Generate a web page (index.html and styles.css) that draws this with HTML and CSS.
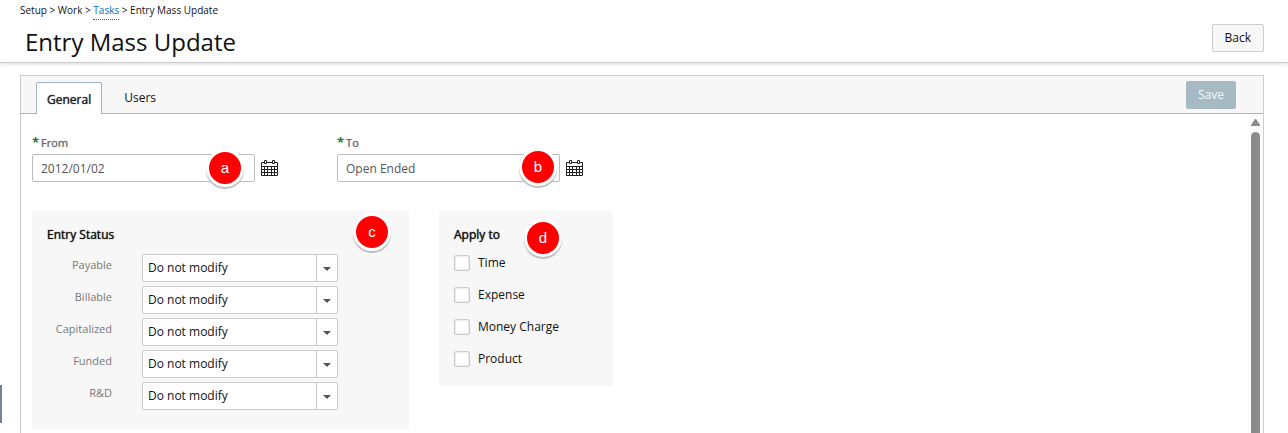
FILE: index.html
```html
<!DOCTYPE html>
<html lang="en">
<head>
<meta charset="UTF-8">
<title>Entry Mass Update</title>
<link rel="stylesheet" href="styles.css">
</head>
<body>
<header class="header">
    <div class="heading">
        <nav class="crumbs">Setup &gt; Work &gt; <a href="#">Tasks</a> &gt; Entry Mass Update</nav>
        <h1>Entry Mass Update</h1>
    </div>
    <button type="button" class="btn">Back</button>
</header>
<div class="handle"></div>
<main class="panel">
    <div class="bar">
        <div class="tabs">
            <button type="button" class="tab active">General</button>
            <button type="button" class="tab">Users</button>
        </div>
        <button type="button" class="btn save">Save</button>
    </div>
    <div class="body">
        <form class="content">
            <div class="dates">
                <div class="field">
                    <label for="from"><b>*</b>From</label>
                    <div class="date">
                        <input type="text" id="from" value="2012/01/02">
                        <span class="mark mark-a">a</span>
                        <svg class="cal" viewBox="0 0 17 17" width="17" height="17">
                            <rect y="2" width="17" height="14" rx="1" fill="#222"/>
                            <path d="M1 3h15v3H1z" fill="#fff"/>
                            <path d="M1 7h2v2H1zM4 7h2v2H4zM7 7h3v2H7zM11 7h2v2h-2zM14 7h2v2h-2zM1 10h2v2H1zM4 10h2v2H4zM7 10h3v2H7zM11 10h2v2h-2zM14 10h2v2h-2zM1 13h2v2H1zM4 13h2v2H4zM7 13h3v2H7zM11 13h2v2h-2zM14 13h2v2h-2z" fill="#fff"/>
                            <rect x="3" width="3" height="4" rx="1" fill="#222"/>
                            <rect x="11" width="3" height="4" rx="1" fill="#222"/>
                            <path d="M4 1h1v2H4zM12 1h1v2h-1z" fill="#fff"/>
                        </svg>
                    </div>
                </div>
                <div class="field">
                    <label for="to"><b>*</b>To</label>
                    <div class="date">
                        <input type="text" id="to" value="Open Ended">
                        <span class="mark mark-b">b</span>
                        <svg class="cal" viewBox="0 0 17 17" width="17" height="17">
                            <rect y="2" width="17" height="14" rx="1" fill="#222"/>
                            <path d="M1 3h15v3H1z" fill="#fff"/>
                            <path d="M1 7h2v2H1zM4 7h2v2H4zM7 7h3v2H7zM11 7h2v2h-2zM14 7h2v2h-2zM1 10h2v2H1zM4 10h2v2H4zM7 10h3v2H7zM11 10h2v2h-2zM14 10h2v2h-2zM1 13h2v2H1zM4 13h2v2H4zM7 13h3v2H7zM11 13h2v2h-2zM14 13h2v2h-2z" fill="#fff"/>
                            <rect x="3" width="3" height="4" rx="1" fill="#222"/>
                            <rect x="11" width="3" height="4" rx="1" fill="#222"/>
                            <path d="M4 1h1v2H4zM12 1h1v2h-1z" fill="#fff"/>
                        </svg>
                    </div>
                </div>
            </div>
            <div class="cards">
                <section class="card status">
                    <h2>Entry Status</h2>
                    <span class="mark mark-c">c</span>
                    <div class="row">
                        <label for="payable">Payable</label>
                        <div class="select"><select id="payable"><option>Do not modify</option></select></div>
                    </div>
                    <div class="row">
                        <label for="billable">Billable</label>
                        <div class="select"><select id="billable"><option>Do not modify</option></select></div>
                    </div>
                    <div class="row">
                        <label for="capitalized">Capitalized</label>
                        <div class="select"><select id="capitalized"><option>Do not modify</option></select></div>
                    </div>
                    <div class="row">
                        <label for="funded">Funded</label>
                        <div class="select"><select id="funded"><option>Do not modify</option></select></div>
                    </div>
                    <div class="row">
                        <label for="rd">R&amp;D</label>
                        <div class="select"><select id="rd"><option>Do not modify</option></select></div>
                    </div>
                </section>
                <section class="card apply">
                    <h2>Apply to</h2>
                    <span class="mark mark-d">d</span>
                    <label><input type="checkbox">Time</label>
                    <label><input type="checkbox">Expense</label>
                    <label><input type="checkbox">Money Charge</label>
                    <label><input type="checkbox">Product</label>
                </section>
            </div>
        </form>
        <div class="scroll">
            <svg viewBox="0 0 9 7" width="9" height="7"><path d="M4 0h1l4 6v1H0V6z" fill="#8b8b8b"/></svg>
            <div class="thumb"></div>
        </div>
    </div>
</main>
</body>
</html>
```
FILE: styles.css
```css
*{margin: 0;padding: 0;box-sizing: border-box;}
body{height: 100vh;display: flex;flex-direction: column;overflow: hidden;background: #fff;color: #111;font: 12px/16px "Open Sans","Noto Sans",sans-serif;}
button,input,select{font: inherit;color: inherit;}

/* page header */
.header{display: flex;justify-content: space-between;align-items: flex-start;padding: 2px 24px 2px 20px;border-bottom: 1px solid #ccc;box-shadow: 0 1px 4px rgba(0,0,0,.15);}
.crumbs{font-size: 10px;line-height: 16px;}
.crumbs a{display: inline-block;color: #0a6ebd;text-decoration: none;border-bottom: 1px dotted #0a6ebd;line-height: 17px;}
h1{font-size: 24px;line-height: 36px;font-weight: 400;padding: 4px 0 0 5px;}
.btn{height: 28px;padding: 0 12px;background: #f7f7f7;border: 1px solid #ccc;border-radius: 2px;}
.header .btn{margin-top: 22px;}
.handle{position: fixed;left: 0;bottom: 10px;width: 2px;height: 38px;background: #77838e;}

/* panel with tabs */
.panel{flex: 1;display: flex;flex-direction: column;min-height: 0;margin: 12px 24px 0 20px;border: 1px solid #ccc;border-bottom: 0;}
.bar{display: flex;justify-content: space-between;align-items: flex-start;height: 38px;padding: 5px 27px 0 15px;background: #f7f7f7;border-bottom: 1px solid #9db3c7;}
.tabs{display: flex;padding-top: 1px;}
.tab{height: 32px;padding: 0 22px;background: none;border: 0;}
.tab.active{padding: 2px 10px 0;background: #fff;border: 1px solid #9db3c7;border-bottom: 0;border-radius: 2px 2px 0 0;color: #222;text-shadow: 0 0 1px #222;}
.btn.save{padding: 0 11px;background: #a7bac4;border-color: #a7bac4;color: #f4f7f8;}
.body{flex: 1;display: flex;min-height: 0;}
.content{flex: 1;padding: 20px 11px 0;overflow: hidden;}
.scroll{display: flex;flex-direction: column;align-items: center;gap: 6px;width: 15px;padding-top: 5px;background: #fcfcfc;}
.thumb{flex: 1;width: 9px;background: #8b8b8b;border-radius: 5px 5px 0 0;}

/* date fields */
.dates{display: flex;gap: 59px;}
.field label{display: block;height: 20px;font-size: 11px;color: #666;text-shadow: 0 0 1px #888;}
.field b{margin-right: 2px;font-size: 13px;color: #1d7c33;text-shadow: none;}
.date{display: flex;align-items: center;gap: 6px;position: relative;}
.date input{width: 223px;height: 28px;padding: 0 8px;border: 1px solid #bbb;border-radius: 2px;color: #555;}

/* cards */
.cards{display: flex;align-items: flex-start;gap: 30px;margin-top: 29px;}
.card{position: relative;padding: 16px 15px;background: #f7f7f7;border-radius: 2px;}
.card h2{font-size: 12px;line-height: 16px;font-weight: 400;text-shadow: 0 0 1px #111;}
.status{width: 377px;height: 218px;}
.status h2{margin-bottom: 11px;}
.row{display: flex;height: 32px;}
.row label{width: 65px;margin-right: 30px;padding-top: 3px;font-size: 11px;text-align: right;color: #777;}
.select{position: relative;width: 196px;height: 28px;}
.select select{width: 100%;height: 28px;padding: 0 5px;appearance: none;background: #fff;border: 1px solid #ccc;border-radius: 2px;}
.select:before{content: "";position: absolute;right: 21px;top: 1px;width: 1px;height: 26px;background: #ccc;}
.select:after{content: "";position: absolute;right: 7px;top: 13px;border: 4px solid transparent;border-top-color: #555;border-bottom: 0;}
.apply{width: 174px;height: 175px;}
.apply h2{margin-bottom: 4px;}
.apply label{display: flex;align-items: center;gap: 8px;height: 32px;}
.apply input{width: 16px;height: 16px;appearance: none;background: #fff;border: 1px solid #ccc;border-radius: 2px;box-shadow: inset 0 0 2px #bbb;}

/* callout markers */
.mark{position: absolute;width: 38px;height: 38px;border: 3px solid #fff;border-radius: 50%;background: red;box-shadow: 0 2px 1px #bbb;color: #fff;font: 15px/32px "Liberation Sans",Arial,sans-serif;text-align: center;}
.mark-a{left: 174px;top: -5px;}
.mark-b{left: 182px;top: -6px;}
.mark-c{right: 18px;top: 2px;}
.mark-d{left: 85px;top: 8px;}
```
